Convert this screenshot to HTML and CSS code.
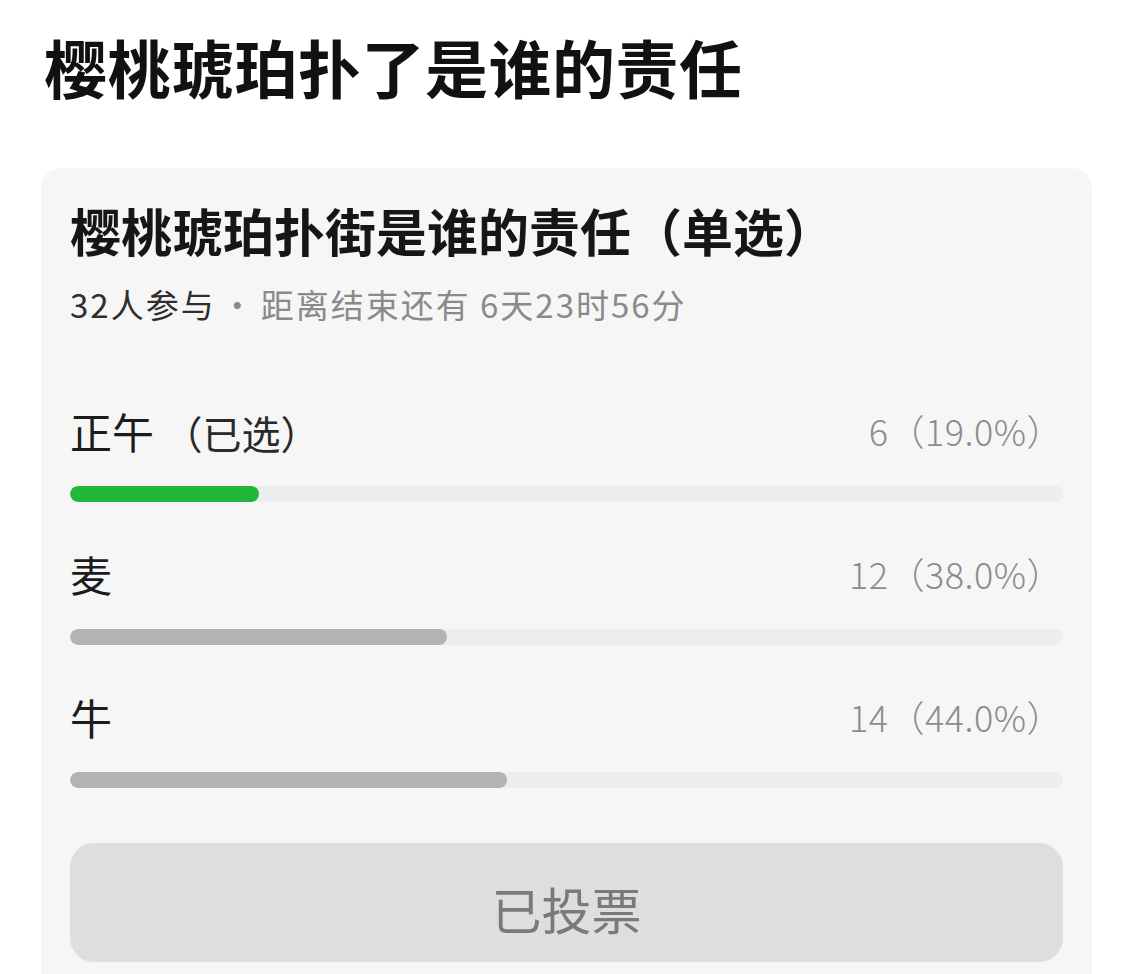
FILE: index.html
```html
<!DOCTYPE html>
<html>
  <head>
    <meta charset="utf-8">
    <link rel="stylesheet" href="styles.css">
  </head>
  <body>
    <h1 class="page-title">樱桃琥珀扑了是谁的责任</h1>

    <section class="poll">
      <h2 class="poll-title">樱桃琥珀扑街是谁的责任（单选）</h2>
      <p class="poll-meta"><span class="count">32人参与</span><span class="dot">·</span><span>距离结束还有 6天23时56分</span></p>

      <div class="options">
        <div class="option">
          <div class="option-head">
            <span class="option-name">正午 <span class="picked">（已选）</span></span>
            <span class="option-result">6（19.0%）</span>
          </div>
          <div class="track"><div class="fill fill-picked" style="width: 19%"></div></div>
        </div>

        <div class="option">
          <div class="option-head">
            <span class="option-name">麦</span>
            <span class="option-result">12（38.0%）</span>
          </div>
          <div class="track"><div class="fill" style="width: 38%"></div></div>
        </div>

        <div class="option">
          <div class="option-head">
            <span class="option-name">牛</span>
            <span class="option-result">14（44.0%）</span>
          </div>
          <div class="track"><div class="fill" style="width: 44%"></div></div>
        </div>
      </div>

      <button class="vote-btn" disabled>已投票</button>
    </section>
  </body>
</html>
```

FILE: styles.css
```css
body {
  margin: 0;
  background: #ffffff;
  font-family: "Noto Sans CJK SC", "Noto Sans", sans-serif;
  color: #151515;
  overflow: hidden;
}

.page-title {
  margin: 0;
  padding: 26px 0 0 44px;
  font-size: 63px;
  line-height: 80px;
  letter-spacing: 0.5px;
  font-weight: 700;
  color: #111111;
}

.poll {
  margin: 62px 38px 0 41px;
  padding: 31px 29px 80px;
  background: #f6f6f6;
  border-radius: 20px;
}

.poll-title {
  margin: 0;
  font-size: 51px;
  line-height: 62px;
  font-weight: 700;
  color: #161616;
}

.poll-meta {
  margin: 21px 0 0;
  font-size: 33px;
  line-height: 44px;
  letter-spacing: 2px;
  color: #8a8a8a;
}

.poll-meta .count {
  color: #2e2e2e;
}

.poll-meta .dot {
  margin: 0 5px;
}

.options {
  margin-top: 76px;
}

.option {
  margin-bottom: 43px;
}

.option-head {
  display: flex;
  justify-content: space-between;
  align-items: center;
  height: 56px;
}

.option-name {
  font-size: 42px;
  color: #1c1c1c;
}

.option-name .picked {
  font-size: 39px;
  color: #2a2a2a;
}

.option-result {
  font-size: 36px;
  font-weight: 300;
  letter-spacing: 0.5px;
  color: #8c8c8c;
}

.track {
  margin-top: 28px;
  height: 16px;
  border-radius: 8px;
  background: #ededed;
  overflow: hidden;
}

.fill {
  height: 100%;
  border-radius: 8px;
  background: #b3b3b3;
}

.fill-picked {
  background: #22b63a;
}

.vote-btn {
  display: block;
  width: 100%;
  height: 119px;
  margin-top: 55px;
  padding: 10px 0 0;
  border: none;
  border-radius: 24px;
  background: #dedede;
  font-family: inherit;
  font-size: 50px;
  color: #7a7a7a;
}
```
